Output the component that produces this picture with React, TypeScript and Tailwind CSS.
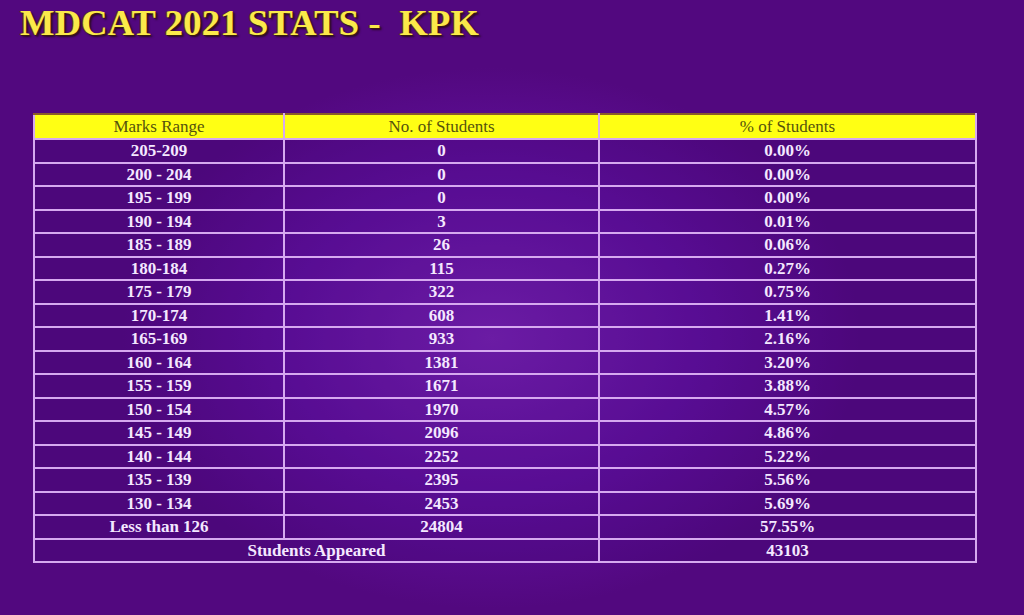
const rows: [string, string, string][] = [
  ["205-209", "0", "0.00%"],
  ["200 - 204", "0", "0.00%"],
  ["195 - 199", "0", "0.00%"],
  ["190 - 194", "3", "0.01%"],
  ["185 - 189", "26", "0.06%"],
  ["180-184", "115", "0.27%"],
  ["175 - 179", "322", "0.75%"],
  ["170-174", "608", "1.41%"],
  ["165-169", "933", "2.16%"],
  ["160 - 164", "1381", "3.20%"],
  ["155 - 159", "1671", "3.88%"],
  ["150 - 154", "1970", "4.57%"],
  ["145 - 149", "2096", "4.86%"],
  ["140 - 144", "2252", "5.22%"],
  ["135 - 139", "2395", "5.56%"],
  ["130 - 134", "2453", "5.69%"],
  ["Less than 126", "24804", "57.55%"],
];

const cell =
  "border-2 border-[#d6a9f0] text-center align-middle p-0 leading-none";

export default function App() {
  return (
    <div className="h-[615px] w-full overflow-hidden bg-[radial-gradient(ellipse_45%_55%_at_48%_55%,#7b24b6_0%,#6210a0_45%,#52087f_80%)] font-['Liberation_Serif',serif]">
      <h1 className="h-[44px] pl-[20px] pt-[3px] text-[36.5px] font-bold leading-[40px] tracking-[0.2px] whitespace-pre text-[#fbe94a] [text-shadow:1px_1px_0_#3a1a10,-1px_0_0_#6b3a2a,2px_2px_2px_#2a0a20]">
        MDCAT 2021 STATS -  KPK
      </h1>
      <div className="pl-[33px] pt-[69px]">
        <table className="w-[942px] table-fixed border-collapse border-2 border-[#d6a9f0]">
          <colgroup>
            <col className="w-[250px]" />
            <col className="w-[315px]" />
            <col className="w-[377px]" />
          </colgroup>
          <thead>
            <tr className="h-[25px] bg-[#ffff14] text-[17px] text-[#55520c]">
              <th className={`${cell} border-t-[#8a5a2a] font-normal`}>Marks Range</th>
              <th className={`${cell} border-t-[#8a5a2a] font-normal`}>No. of Students</th>
              <th className={`${cell} border-t-[#8a5a2a] font-normal`}>% of Students</th>
            </tr>
          </thead>
          <tbody className="text-[17px] font-bold text-[#f4e8ff]">
            {rows.map(([range, count, pct]) => (
              <tr key={range} className="h-[23.5px] bg-[#3c0570]/25">
                <td className={cell}>{range}</td>
                <td className={cell}>{count}</td>
                <td className={cell}>{pct}</td>
              </tr>
            ))}
            <tr className="h-[23.5px] bg-[#3c0570]/25">
              <td className={cell} colSpan={2}>
                Students Appeared
              </td>
              <td className={cell}>43103</td>
            </tr>
          </tbody>
        </table>
      </div>
    </div>
  );
}
